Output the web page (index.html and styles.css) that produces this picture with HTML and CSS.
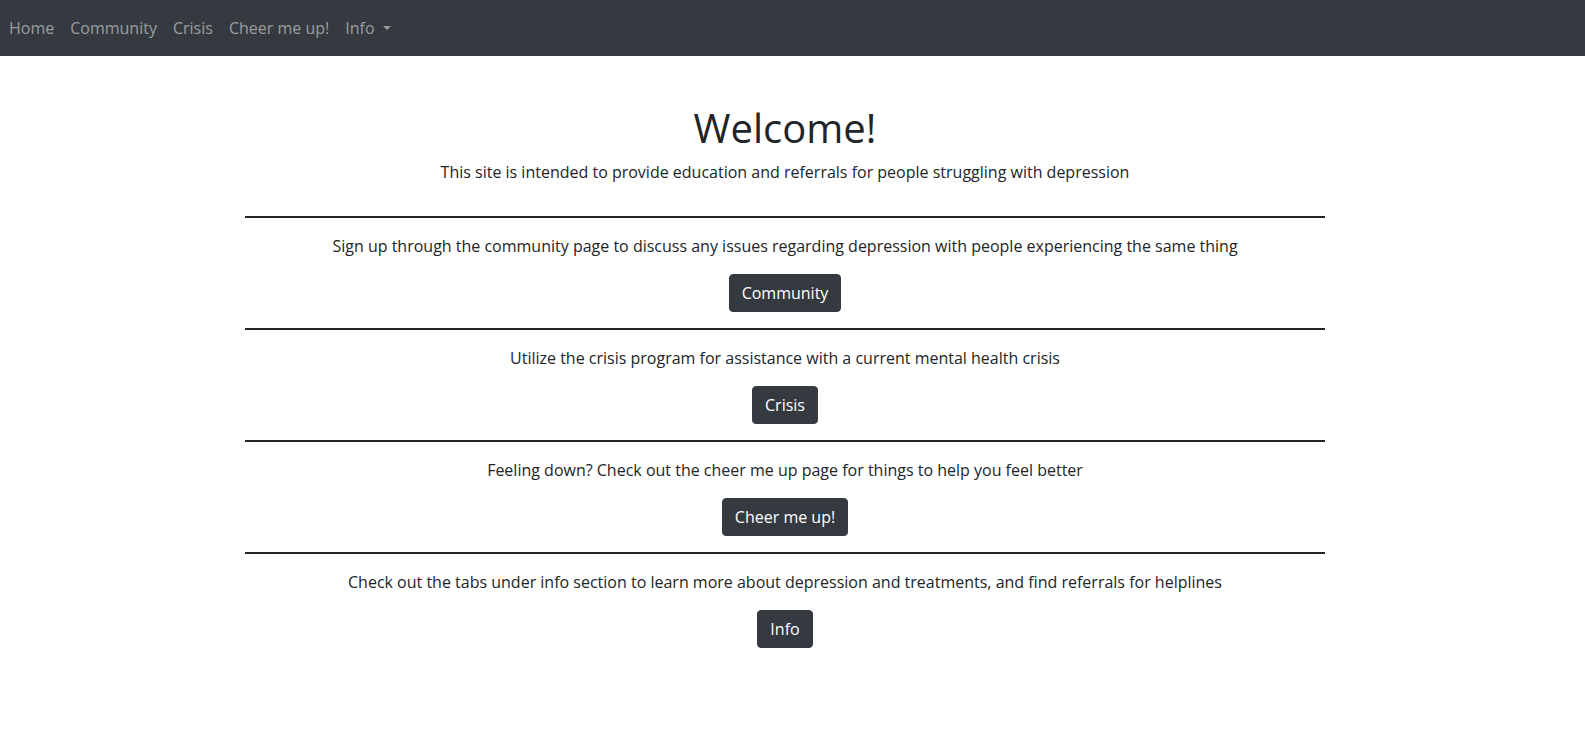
FILE: index.html
```html
<!DOCTYPE html>
<html lang="en">
<head>
<meta charset="utf-8">
<title>Home</title>
<link rel="stylesheet" href="styles.css">
</head>
<body>
<nav class="navbar">
  <ul class="nav-list">
    <li><a class="nav-link" href="#">Home</a></li>
    <li><a class="nav-link" href="#">Community</a></li>
    <li><a class="nav-link" href="#">Crisis</a></li>
    <li><a class="nav-link" href="#">Cheer me up!</a></li>
    <li><a class="nav-link dropdown-toggle" href="#">Info</a></li>
  </ul>
</nav>
<div class="page">
  <main class="content">
    <h1 class="title">Welcome!</h1>
    <p class="lead">This site is intended to provide education and referrals for people struggling with depression</p>
    <section class="block">
      <hr class="divider">
      <p class="text">Sign up through the community page to discuss any issues regarding depression with people experiencing the same thing</p>
      <a class="btn" href="#">Community</a>
    </section>
    <section class="block">
      <hr class="divider">
      <p class="text">Utilize the crisis program for assistance with a current mental health crisis</p>
      <a class="btn" href="#">Crisis</a>
    </section>
    <section class="block">
      <hr class="divider">
      <p class="text">Feeling down? Check out the cheer me up page for things to help you feel better</p>
      <a class="btn" href="#">Cheer me up!</a>
    </section>
    <section class="block">
      <hr class="divider">
      <p class="text">Check out the tabs under info section to learn more about depression and treatments, and find referrals for helplines</p>
      <a class="btn" href="#">Info</a>
    </section>
  </main>
</div>
</body>
</html>
```
FILE: styles.css
```css
* { box-sizing: border-box; }

body {
  margin: 0;
  font-family: "Open Sans", "Noto Sans", sans-serif;
  font-size: 16px;
  line-height: 1.5;
  color: #212529;
  background: #fff;
}

.navbar {
  background: #343a40;
  padding: 8px 0 8px 1px;
}

.nav-list {
  display: flex;
  list-style: none;
  margin: 0;
  padding: 0;
}

.nav-link {
  display: block;
  padding: 8px;
  color: rgba(255, 255, 255, 0.5);
  text-decoration: none;
}

.dropdown-toggle::after {
  content: "";
  display: inline-block;
  vertical-align: 0.255em;
  border-top: 0.3em solid;
  border-right: 0.3em solid transparent;
  border-left: 0.3em solid transparent;
  border-bottom: 0;
  margin-left: 8px;
}

.page {
  padding-right: 15px;
}

.content {
  width: 1080px;
  margin: 48px auto 0;
  text-align: center;
}

.title {
  font-size: 40px;
  font-weight: 400;
  line-height: 48px;
  margin: 0 0 8px;
}

.lead,
.text {
  margin: 0 0 16px;
}

.block {
  display: flex;
  flex-direction: column;
  align-items: center;
}

.divider {
  align-self: stretch;
  border: 0;
  border-top: 2px solid #212529;
  margin: 16px 0;
}

.btn {
  display: inline-block;
  padding: 6px 12px;
  border: 1px solid #343a40;
  border-radius: 4px;
  background: #343a40;
  color: #fff;
  text-decoration: none;
  line-height: 24px;
}
```
